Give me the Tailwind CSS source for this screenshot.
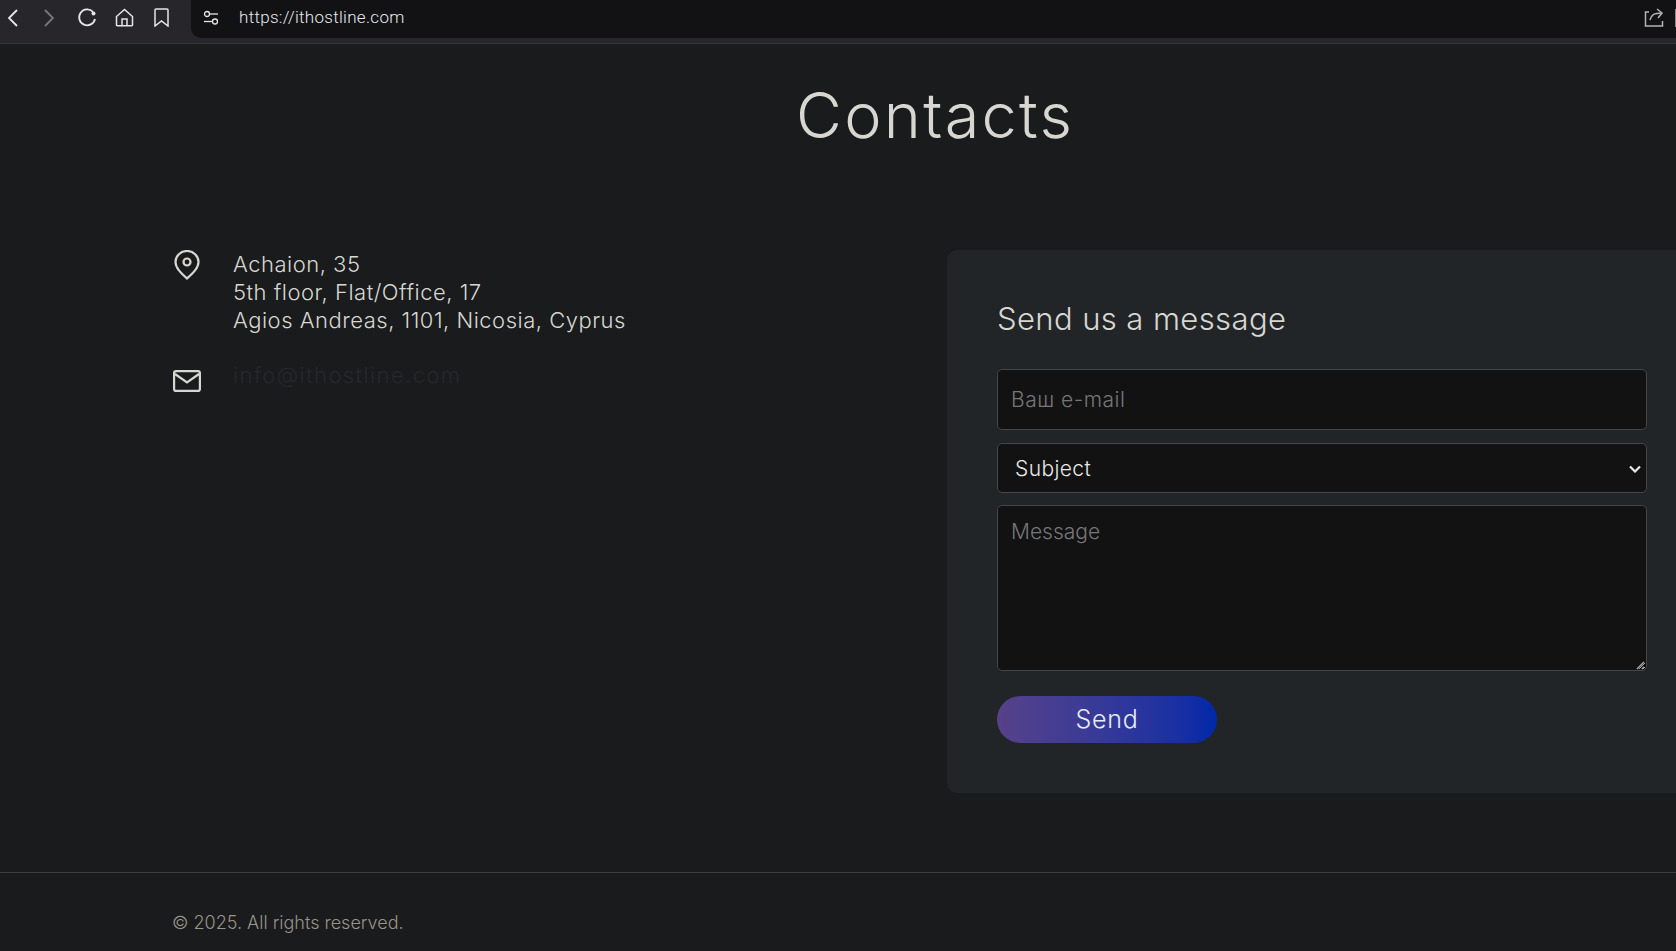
<!DOCTYPE html>
<html lang="en">
<head>
  <meta charset="UTF-8" />
  <script src="https://cdn.jsdelivr.net/npm/@tailwindcss/browser@4"></script>
  <title>Contacts</title>
</head>
<body class="bg-[#191b1d] h-[951px] overflow-hidden font-['Inter',sans-serif] text-[#d8d6d0] scheme-dark">
  <!-- Browser bar -->
  <div class="h-[44px] bg-[#27272b] border-b border-[#333337] flex text-[#e6e6e6]">
    <div class="w-[191px] h-[35px] flex items-center shrink-0">
      <svg class="ml-[5px]" width="16" height="18" viewBox="0 0 16 18" fill="none" stroke="currentColor" stroke-width="1.800"><path d="M12 1 4 9l8 8"/></svg>
      <svg class="ml-[20px] text-[#77777b]" width="16" height="18" viewBox="0 0 16 18" fill="none" stroke="currentColor" stroke-width="1.800"><path d="m4 1 8 8-8 8"/></svg>
      <svg class="ml-[20px]" width="20" height="20" viewBox="0 0 20 20" fill="none" stroke="currentColor" stroke-width="1.800"><path d="M16 3.800A8 8 0 1 0 18 11"/><circle cx="16.500" cy="5.500" r="2" fill="currentColor" stroke="none"/></svg>
      <svg class="ml-[18px]" width="19" height="19" viewBox="0 0 19 19" fill="none" stroke="currentColor" stroke-width="1.500"><path d="M1.500 8.500 9.500 1.500l8 7V17a.8.8 0 0 1-.8.8H2.300a.8.8 0 0 1-.8-.8z"/><path d="M7 17.800V11h5v6.800"/></svg>
      <svg class="ml-[20px]" width="15" height="19" viewBox="0 0 15 19" fill="none" stroke="currentColor" stroke-width="1.500"><path d="M1 2a1 1 0 0 1 1-1h11a1 1 0 0 1 1 1v16l-6.500-5L1 18z"/></svg>
    </div>
    <div class="flex-1 h-[38px] bg-[#121214] rounded-bl-[10px] flex items-center pl-[12px] pb-[3px]">
      <svg width="16" height="16" viewBox="0 0 16 16" fill="none" stroke="currentColor" stroke-width="1.300"><circle cx="4" cy="4" r="2.500"/><path d="M7 4h8"/><circle cx="12" cy="11.500" r="2.500"/><path d="M1 11.500h8"/></svg>
      <span class="ml-[20px] font-['Roboto',sans-serif] font-light text-[17px] tracking-[0.3px] text-[#e6eaf0]">https://ithostline.com</span>
      <svg class="ml-auto mr-[11px]" width="20" height="20" viewBox="0 0 20 20" fill="none" stroke="#b4b4b4" stroke-width="1.500"><path d="M5 4H1.500v14h17v-5"/><path d="M6 12c1-5 4-7 12-7"/><path d="m13 1 5 4-4 5"/></svg>
      <div class="w-[1px] h-[18px] bg-[#8a8a8a]"></div>
    </div>
  </div>

  <h1 class="h-[140px] pt-[34px] pl-[796px] text-[63px] leading-[74px] font-light tracking-[2.300px] text-[#d8d6d0]">Contacts</h1>

  <main class="flex pt-[66px] pl-[173px] w-[1800px]">
    <div class="w-[774px] shrink-0 text-[22px] leading-[28px] tracking-[0.5px] font-light">
      <div class="flex">
        <svg class="shrink-0" width="28" height="30" viewBox="0 0 28 30" fill="none" stroke="#d8d6d0" stroke-width="2.200"><path d="M14 28.500C8 23 2.500 18 2.500 12a11.500 11 0 0 1 23 0c0 6-5.500 11-11.500 16.500z"/><circle cx="14" cy="12" r="3.500"/></svg>
        <p class="ml-[32px]">Achaion, 35<br>5th floor, Flat/Office, 17<br>Agios Andreas, 1101, Nicosia, Cyprus</p>
      </div>
      <div class="flex mt-[27px]">
        <svg class="mt-[9px] shrink-0" width="28" height="22" viewBox="0 0 28 22" fill="none" stroke="#d8d6d0" stroke-width="2.200"><rect x="1.100" y="1.100" width="25.800" height="19.800" rx="2"/><path d="m2 4 12 8.500L26 4"/></svg>
        <a class="ml-[32px] text-[#26282b] tracking-[1.400px]">info@ithostline.com</a>
      </div>
    </div>
    <form class="w-[750px] h-[543px] shrink-0 bg-[#212528] rounded-[10px] pt-[51px] px-[50px]">
      <h2 class="text-[31px] leading-[36px] font-light tracking-[0.4px]">Send us a message</h2>
      <input type="text" placeholder="Ваш e-mail" class="block w-[650px] h-[61px] mt-[32px] px-[13px] bg-[#121212] border border-[#444649] rounded-[5px] text-[21px] font-light tracking-[0.5px] placeholder:text-[#77777a]" />
      <div class="relative mt-[13px]">
        <select class="block w-[650px] h-[50px] pt-[2px] pr-[13px] pl-[17px] appearance-none bg-[#121212] border border-[#444649] rounded-[5px] text-[21px] font-light tracking-[0.4px] text-[#e8e8e8]">
          <option>Subject</option>
        </select>
        <svg class="absolute left-[632px] top-[22px] pointer-events-none" width="12" height="8" viewBox="0 0 12 8" fill="none" stroke="#e8e8e8" stroke-width="2.200"><path d="m1 1.500 5 5 5-5"/></svg>
      </div>
      <div class="relative mt-[12px]">
        <textarea placeholder="Message" class="block w-[650px] h-[166px] px-[13px] py-[10px] bg-[#121212] border border-[#444649] rounded-[5px] text-[21px] font-light placeholder:text-[#77777a]"></textarea>
        <svg class="absolute left-[639px] top-[156px] pointer-events-none" width="9" height="9" viewBox="0 0 9 9" fill="none" stroke="#a8a8a8" stroke-width="1.500"><path d="M1 8 8 1M6 8l2-2"/></svg>
      </div>
      <button type="button" class="block w-[220px] h-[47px] mt-[25px] rounded-full bg-gradient-to-r from-[#574189] to-[#0028a8] text-[25px] font-light tracking-[0.8px] text-[#e8ebf5]">Send</button>
    </form>
  </main>

  <footer class="mt-[79px] border-t border-[#3a3c3f] pt-[36px] pl-[172px] text-[18px] leading-[28px] font-light text-[#9c9388]">© 2025. All rights reserved.</footer>
</body>
</html>
